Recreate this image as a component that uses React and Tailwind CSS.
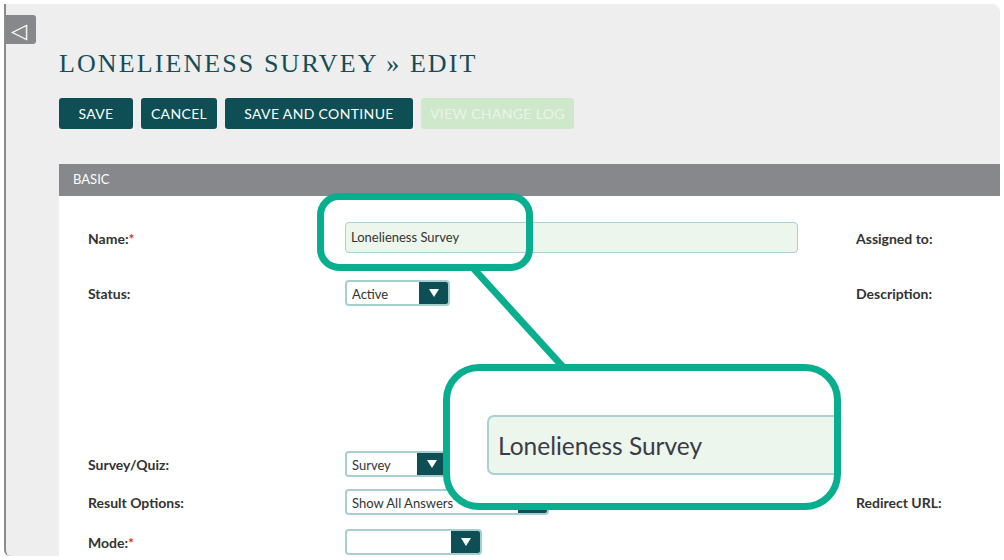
import React from "react";

function Tri() {
  return (
    <svg width="10" height="8" viewBox="0 0 10 8">
      <path d="M0 0 H10 L5 8 Z" fill="#ffffff" />
    </svg>
  );
}

function Select({ value, width }) {
  return (
    <div
      className="flex h-[26px] items-stretch rounded-[4px] border-2 border-[#a6cfd2] bg-white overflow-hidden"
      style={{ width }}
    >
      <div className="flex-1 flex items-center pl-[5px] pt-[3px] text-[13px] text-[#333333]">{value}</div>
      <div className="w-[29px] bg-[#0d4f55] flex items-center justify-center">
        <Tri />
      </div>
    </div>
  );
}

function Label({ children, req }) {
  return (
    <div className="w-[257px] shrink-0 pt-[1px] text-[14px] font-bold text-[#333333]">
      {children}
      {req && <span className="text-[#e03030]">*</span>}
    </div>
  );
}

function RightLabel({ children }) {
  return <div className="pt-[1px] text-[14px] font-bold text-[#333333]">{children}</div>;
}

export default function App() {
  return (
    <div
      className="relative w-[1004px] h-[560px] bg-white p-[4px] overflow-hidden"
      style={{ fontFamily: "Lato, 'Open Sans', sans-serif" }}
    >
      <div className="relative h-full bg-[#eeeeee] border-l-2 border-[#8a8a8a] rounded-tr-[8px] rounded-bl-[6px] overflow-hidden">
        {/* sidebar toggle */}
        <div className="absolute left-0 top-[11px] w-[30px] h-[29px] bg-[#87888b] rounded-r-[3px] flex items-center justify-center text-white text-[21px] leading-none pr-[4px] pb-[1px]">
          ◁
        </div>

        <div className="pl-[53px] pt-[44px] flex flex-col h-full">
          <h1
            className="text-[26px] leading-[32px] tracking-[2.1px] text-[#134e57]"
            style={{ fontFamily: "'Liberation Serif', 'Times New Roman', serif" }}
          >
            LONELIENESS SURVEY » EDIT
          </h1>

          <div className="mt-[18px] flex gap-[8px] text-[14px] tracking-[0.35px] text-white">
            <div className="w-[74px] h-[31px] rounded-[3px] bg-[#0d4f55] flex items-center justify-center">SAVE</div>
            <div className="w-[76px] h-[31px] rounded-[3px] bg-[#0d4f55] flex items-center justify-center">CANCEL</div>
            <div className="w-[188px] h-[31px] rounded-[3px] bg-[#0d4f55] flex items-center justify-center">SAVE AND CONTINUE</div>
            <div className="w-[153px] h-[31px] rounded-[3px] bg-[#cfe8cc] text-[#e9f4e7] flex items-center justify-center">VIEW CHANGE LOG</div>
          </div>

          <div className="mt-[35px] flex-1 flex flex-col">
            <div className="h-[32px] bg-[#87888b] flex items-center pl-[14px] pb-[1px] text-[13px] text-white">BASIC</div>
            <div className="flex-1 bg-white pl-[29px] pt-[26px]">
              {/* Name */}
              <div className="flex items-center h-[31px]">
                <Label req>Name:</Label>
                <div className="w-[511px] shrink-0">
                  <div className="w-[453px] h-[31px] rounded-[4px] border border-[#a9d0d3] bg-[#edf6ec] flex items-center pl-[5px] pt-[1px] text-[13px] text-[#333333]">
                    Lonelieness Survey
                  </div>
                </div>
                <RightLabel>Assigned to:</RightLabel>
              </div>
              {/* Status */}
              <div className="flex items-center h-[26px] mt-[27px]">
                <Label>Status:</Label>
                <div className="w-[511px] shrink-0">
                  <Select value="Active" width={105} />
                </div>
                <RightLabel>Description:</RightLabel>
              </div>
              {/* Survey/Quiz */}
              <div className="flex items-center h-[26px] mt-[145px]">
                <Label>Survey/Quiz:</Label>
                <div className="w-[511px] shrink-0">
                  <Select value="Survey" width={103} />
                </div>
              </div>
              {/* Result Options */}
              <div className="flex items-center h-[26px] mt-[12px]">
                <Label>Result Options:</Label>
                <div className="w-[511px] shrink-0">
                  <Select value="Show All Answers" width={204} />
                </div>
                <RightLabel>Redirect URL:</RightLabel>
              </div>
              {/* Mode */}
              <div className="flex items-center h-[26px] mt-[14px]">
                <Label req>Mode:</Label>
                <div className="w-[511px] shrink-0">
                  <Select value="" width={137} />
                </div>
              </div>
            </div>
          </div>
        </div>
      </div>

      {/* callout overlay */}
      <svg className="absolute left-0 top-0 pointer-events-none" width="1004" height="560">
        <line x1="473" y1="268" x2="564" y2="368" stroke="#08ae8e" strokeWidth="7" />
      </svg>
      <div className="absolute left-[317px] top-[193px] w-[216px] h-[78px] border-[7px] border-[#08ae8e] rounded-[22px]" />
      <div className="absolute left-[443px] top-[364px] w-[398px] h-[146px] border-[7px] border-[#08ae8e] rounded-[36px] bg-white overflow-hidden">
        <div className="absolute left-[37px] top-[44px] w-[420px] h-[60px] rounded-[7px] border-2 border-[#a9d0d3] bg-[#edf6ec] flex items-center pl-[9px] pt-[2px] text-[24.5px] text-[#3a3a48]">
          Lonelieness Survey
        </div>
      </div>
    </div>
  );
}
